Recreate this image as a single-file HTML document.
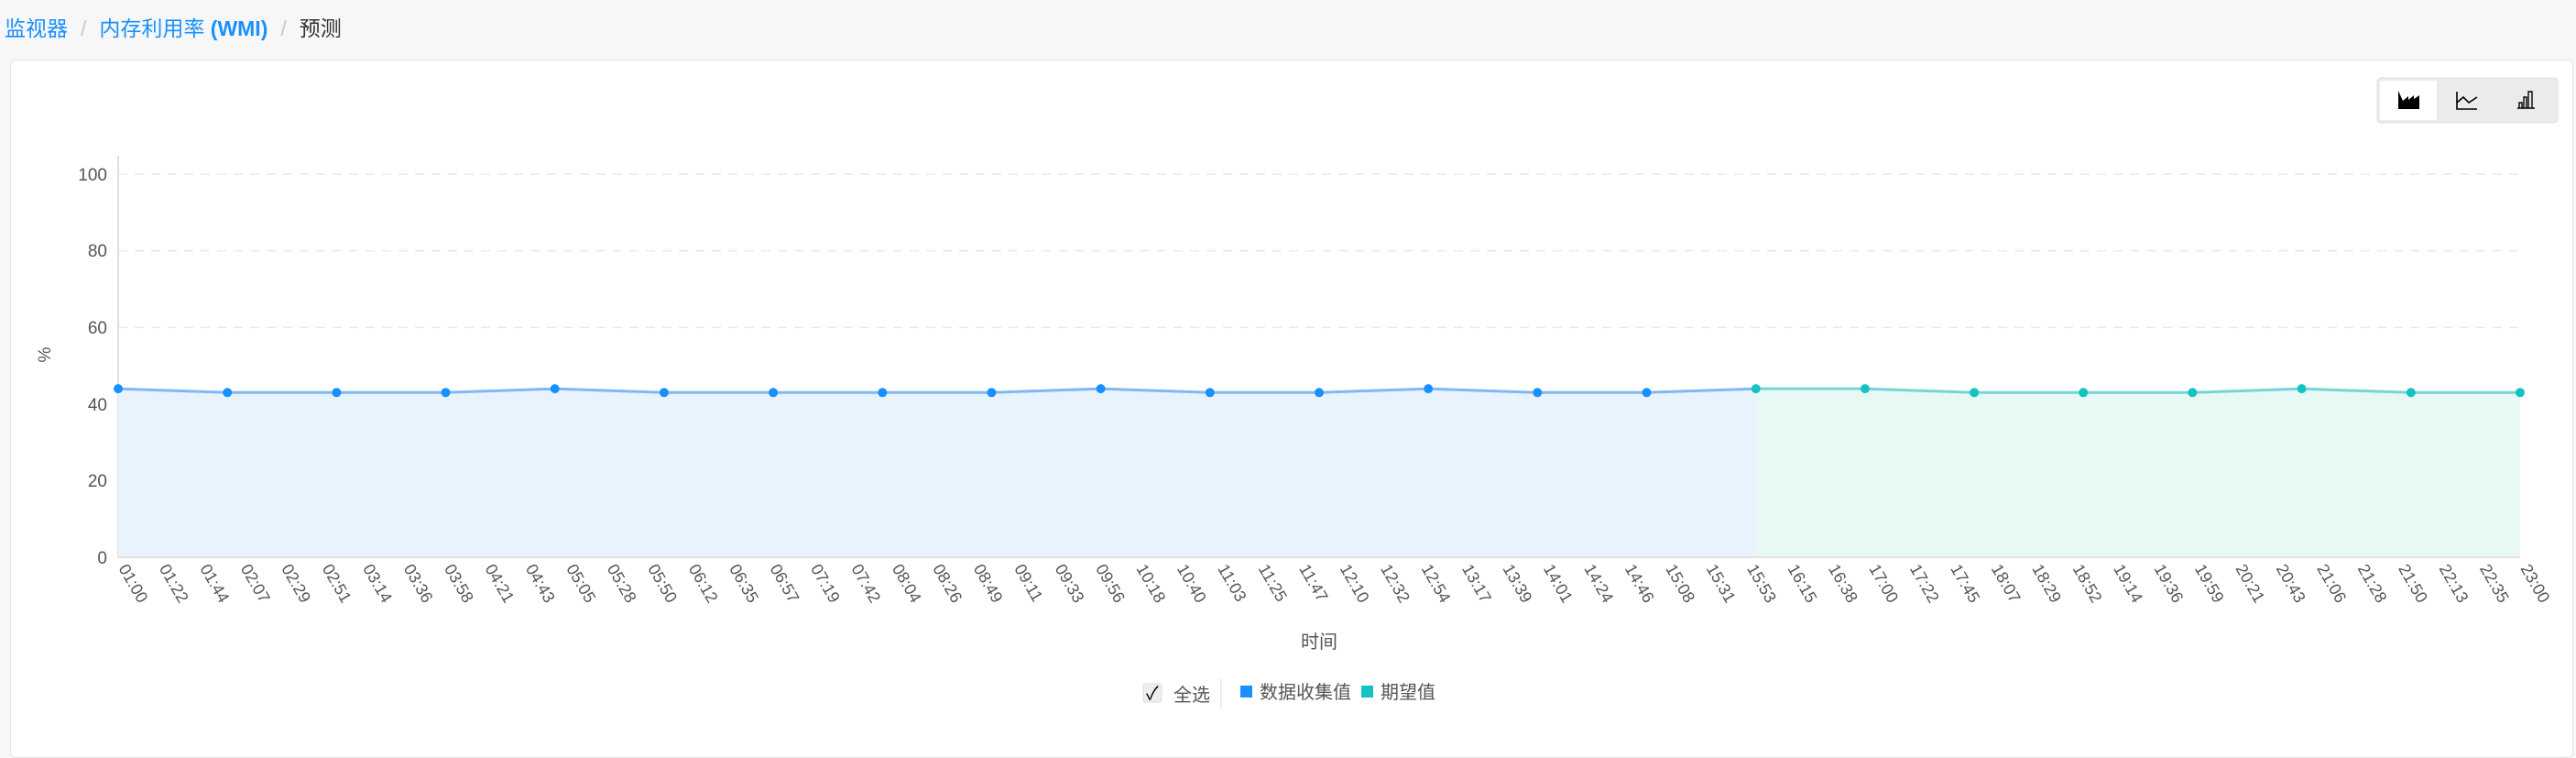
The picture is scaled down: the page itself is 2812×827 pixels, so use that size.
<!DOCTYPE html>
<html><head><meta charset="utf-8"><style>
html,body{margin:0;padding:0;width:2812px;height:788px;background:#f7f7f7;overflow:hidden;font-family:"Liberation Sans","Noto Sans CJK SC",sans-serif;}
.bc{position:absolute;left:5px;top:12px;font-size:23px;color:#1890ff;white-space:nowrap}
.bc .sep{color:#c8c8c8;margin:0 14px}
.bc .cur{color:#333}
.card{position:absolute;left:11px;top:65px;width:2796px;height:760px;background:#fff;border:1px solid #e4e4e4;border-radius:6px}
</style></head><body>
<div class="bc">监视器<span class="sep">/</span>内存利用率 <b>(WMI)</b><span class="sep">/</span><span class="cur">预测</span></div>
<div class="card"></div>
<svg style="position:absolute;left:0;top:0" width="2812" height="788" viewBox="0 0 2812 788" font-family="Liberation Sans, Noto Sans CJK SC, sans-serif">
<rect x="2595" y="85" width="197" height="49" rx="4" fill="#ebebeb" stroke="#e0e0e0"/>
<rect x="2598" y="88" width="62" height="43" rx="2" fill="#fff"/>
<path d="M2618 99 V119 H2641 V104 L2635 108 V104 L2629 109 V105 L2623 110 Z" fill="#000"/>
<path d="M2682 100 V119 H2704 M2682 112 L2689 106 L2695 112 L2704 106" fill="none" stroke="#000" stroke-width="1.6"/>
<path d="M2748 118 H2767 M2750 118 V112 H2753 V118 M2755 118 V106 H2758 V118 M2760 118 V100 H2764 V118" fill="none" stroke="#000" stroke-width="1.4"/>
<g stroke="#e8e8e8" stroke-dasharray="10,8" stroke-width="1.5">
<line x1="129" y1="190" x2="2751" y2="190"/><line x1="129" y1="273.6" x2="2751" y2="273.6"/><line x1="129" y1="357.2" x2="2751" y2="357.2"/><line x1="129" y1="440.8" x2="2751" y2="440.8"/><line x1="129" y1="524.4" x2="2751" y2="524.4"/>
</g>
<line x1="129" y1="170" x2="129" y2="608" stroke="#e0e0e0" stroke-width="2"/>
<g font-size="19" fill="#555" text-anchor="end">
<text x="117" y="197">100</text><text x="117" y="280">80</text><text x="117" y="364">60</text><text x="117" y="448">40</text><text x="117" y="531">20</text><text x="117" y="615">0</text>
</g>
<text transform="translate(55,387) rotate(-90)" font-size="19" fill="#555" text-anchor="middle">%</text>
<polygon fill="#e8f3fd" points="129,424.1 248.2,428.3 367.4,428.3 486.5,428.3 605.7,424.1 724.9,428.3 844.1,428.3 963.3,428.3 1082.4,428.3 1201.6,424.1 1320.8,428.3 1440,428.3 1559.2,424.1 1678.3,428.3 1797.5,428.3 1916.7,424.1 1916.7,608 129,608"/>
<polygon fill="#e7f8f5" points="1916.7,424.1 2035.9,424.1 2155.1,428.3 2274.2,428.3 2393.4,428.3 2512.6,424.1 2631.8,428.3 2751,428.3 2751,608 1916.7,608"/>
<polyline fill="none" stroke="#7fb8f3" stroke-width="3" points="129,424.1 248.2,428.3 367.4,428.3 486.5,428.3 605.7,424.1 724.9,428.3 844.1,428.3 963.3,428.3 1082.4,428.3 1201.6,424.1 1320.8,428.3 1440,428.3 1559.2,424.1 1678.3,428.3 1797.5,428.3 1916.7,424.1"/>
<polyline fill="none" stroke="#74d6d3" stroke-width="3" points="1916.7,424.1 2035.9,424.1 2155.1,428.3 2274.2,428.3 2393.4,428.3 2512.6,424.1 2631.8,428.3 2751,428.3"/>
<g fill="#1890ff">
<circle cx="129" cy="424.1" r="5"/><circle cx="248.2" cy="428.3" r="5"/><circle cx="367.4" cy="428.3" r="5"/><circle cx="486.5" cy="428.3" r="5"/><circle cx="605.7" cy="424.1" r="5"/><circle cx="724.9" cy="428.3" r="5"/><circle cx="844.1" cy="428.3" r="5"/><circle cx="963.3" cy="428.3" r="5"/><circle cx="1082.4" cy="428.3" r="5"/><circle cx="1201.6" cy="424.1" r="5"/><circle cx="1320.8" cy="428.3" r="5"/><circle cx="1440" cy="428.3" r="5"/><circle cx="1559.2" cy="424.1" r="5"/><circle cx="1678.3" cy="428.3" r="5"/><circle cx="1797.5" cy="428.3" r="5"/>
</g>
<g fill="#13c2c2">
<circle cx="1916.7" cy="424.1" r="5"/><circle cx="2035.9" cy="424.1" r="5"/><circle cx="2155.1" cy="428.3" r="5"/><circle cx="2274.2" cy="428.3" r="5"/><circle cx="2393.4" cy="428.3" r="5"/><circle cx="2512.6" cy="424.1" r="5"/><circle cx="2631.8" cy="428.3" r="5"/><circle cx="2751" cy="428.3" r="5"/>
</g>
<line x1="129" y1="608" x2="2751" y2="608" stroke="#e0e0e0" stroke-width="2"/>
<g font-size="18" fill="#555">
<text transform="translate(129,620) rotate(60)">01:00</text><text transform="translate(173.4,620) rotate(60)">01:22</text><text transform="translate(217.9,620) rotate(60)">01:44</text><text transform="translate(262.3,620) rotate(60)">02:07</text><text transform="translate(306.8,620) rotate(60)">02:29</text><text transform="translate(351.2,620) rotate(60)">02:51</text><text transform="translate(395.6,620) rotate(60)">03:14</text><text transform="translate(440.1,620) rotate(60)">03:36</text><text transform="translate(484.5,620) rotate(60)">03:58</text><text transform="translate(529,620) rotate(60)">04:21</text><text transform="translate(573.4,620) rotate(60)">04:43</text><text transform="translate(617.8,620) rotate(60)">05:05</text><text transform="translate(662.3,620) rotate(60)">05:28</text><text transform="translate(706.7,620) rotate(60)">05:50</text><text transform="translate(751.2,620) rotate(60)">06:12</text><text transform="translate(795.6,620) rotate(60)">06:35</text><text transform="translate(840,620) rotate(60)">06:57</text><text transform="translate(884.5,620) rotate(60)">07:19</text><text transform="translate(928.9,620) rotate(60)">07:42</text><text transform="translate(973.4,620) rotate(60)">08:04</text><text transform="translate(1017.8,620) rotate(60)">08:26</text><text transform="translate(1062.2,620) rotate(60)">08:49</text><text transform="translate(1106.7,620) rotate(60)">09:11</text><text transform="translate(1151.1,620) rotate(60)">09:33</text><text transform="translate(1195.6,620) rotate(60)">09:56</text><text transform="translate(1240,620) rotate(60)">10:18</text><text transform="translate(1284.4,620) rotate(60)">10:40</text><text transform="translate(1328.9,620) rotate(60)">11:03</text><text transform="translate(1373.3,620) rotate(60)">11:25</text><text transform="translate(1417.8,620) rotate(60)">11:47</text><text transform="translate(1462.2,620) rotate(60)">12:10</text><text transform="translate(1506.6,620) rotate(60)">12:32</text><text transform="translate(1551.1,620) rotate(60)">12:54</text><text transform="translate(1595.5,620) rotate(60)">13:17</text><text transform="translate(1640,620) rotate(60)">13:39</text><text transform="translate(1684.4,620) rotate(60)">14:01</text><text transform="translate(1728.8,620) rotate(60)">14:24</text><text transform="translate(1773.3,620) rotate(60)">14:46</text><text transform="translate(1817.7,620) rotate(60)">15:08</text><text transform="translate(1862.2,620) rotate(60)">15:31</text><text transform="translate(1906.6,620) rotate(60)">15:53</text><text transform="translate(1951,620) rotate(60)">16:15</text><text transform="translate(1995.5,620) rotate(60)">16:38</text><text transform="translate(2039.9,620) rotate(60)">17:00</text><text transform="translate(2084.4,620) rotate(60)">17:22</text><text transform="translate(2128.8,620) rotate(60)">17:45</text><text transform="translate(2173.2,620) rotate(60)">18:07</text><text transform="translate(2217.7,620) rotate(60)">18:29</text><text transform="translate(2262.1,620) rotate(60)">18:52</text><text transform="translate(2306.6,620) rotate(60)">19:14</text><text transform="translate(2351,620) rotate(60)">19:36</text><text transform="translate(2395.4,620) rotate(60)">19:59</text><text transform="translate(2439.9,620) rotate(60)">20:21</text><text transform="translate(2484.3,620) rotate(60)">20:43</text><text transform="translate(2528.8,620) rotate(60)">21:06</text><text transform="translate(2573.2,620) rotate(60)">21:28</text><text transform="translate(2617.6,620) rotate(60)">21:50</text><text transform="translate(2662.1,620) rotate(60)">22:13</text><text transform="translate(2706.5,620) rotate(60)">22:35</text><text transform="translate(2751,620) rotate(60)">23:00</text>
</g>
<text x="1440" y="707" font-size="20" fill="#555" text-anchor="middle">时间</text>
<rect x="1248" y="746" width="20" height="20" rx="2" fill="#eee" stroke="#ddd"/>
<text x="1251" y="763" font-size="20" fill="#000">✓</text>
<text x="1281" y="765" font-size="20" fill="#555">全选</text>
<line x1="1333" y1="740" x2="1333" y2="775" stroke="#ddd"/>
<rect x="1354" y="748" width="13" height="13" fill="#1890ff"/>
<text x="1375" y="762" font-size="20" fill="#555">数据收集值</text>
<rect x="1486" y="748" width="13" height="13" fill="#13c2c2"/>
<text x="1507" y="762" font-size="20" fill="#555">期望值</text>
</svg>
</body></html>
